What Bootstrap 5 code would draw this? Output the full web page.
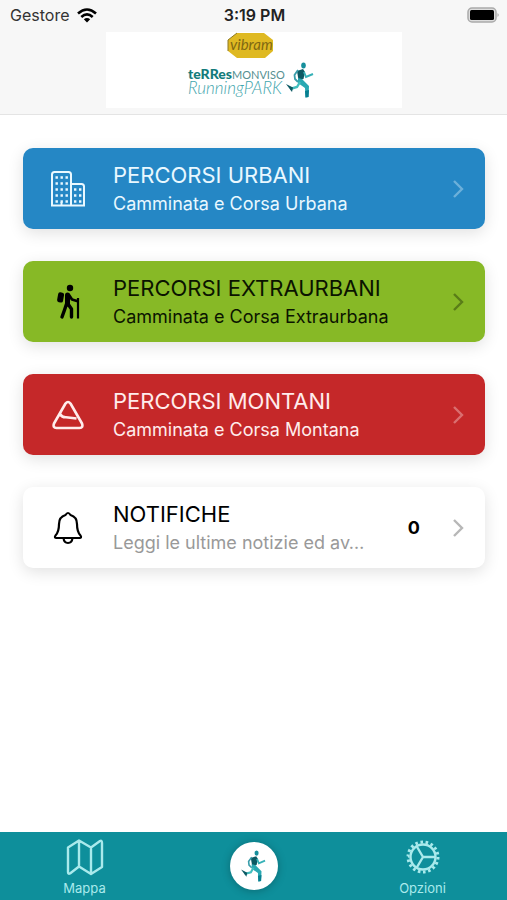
<!DOCTYPE html>
<html lang="it">
<head>
<meta charset="utf-8">
<meta name="viewport" content="width=device-width, initial-scale=1">
<title>Terres Monviso Running Park</title>
<link href="https://cdn.jsdelivr.net/npm/bootstrap@5.3.0/dist/css/bootstrap.min.css" rel="stylesheet">
<style>
body { font-family: Inter, "Liberation Sans", sans-serif; color: #000; background: #fff; }
svg { display: block; flex: none; }
.top-area { background: #f7f7f7; border-bottom: 1px solid #e4e4e4; padding-bottom: 6px; }
.status-bar { height: 32px; padding: 0 8px 2px 10px; font-size: 16px; line-height: 24px; }
.status-bar > * { flex: 1 1 0; }
.carrier { color: #333; }
.clock { font-weight: 600; color: #222; }
.brand-banner { width: 296px; height: 76px; background: #fff; }
.menu { padding: 33px 22px 24px 23px; gap: 32px; }
.tile { min-height: 81px; border-radius: 10px; padding: 10px 21px 10px 25px; box-shadow: 0 4px 16px rgba(0,0,0,.12); }
.tile-blue { background: #2587c5; color: #e9f8ff; }
.tile-green { background: #87b926; color: #0b1400; }
.tile-red { background: #c52829; color: #ffecec; }
.tile-white { background: #fff; color: #000; }
.tile-icon { width: 40px; margin-right: 25px; }
.tile-text { padding-top: 2px; }
.tile-title { font-size: 22px; line-height: 29px; }
.tile-sub { font-size: 18px; line-height: 28px; }
.tile-white .tile-sub { color: #999; }
.chev { opacity: .36; }
.tile-white .chev { opacity: .28; }
.counter { font-size: 18px; font-weight: 700; margin: 0 32px 0 36px; }
.tab-area { background: #0e8f9b; height: 68px; }
.tab-area > * { flex: 1 1 0; }
.tab-link { color: #a9eaec; font-size: 13px; line-height: 16px; padding-top: 2px; }
.tab-link:hover { color: #fff; }
.home-disc { width: 48px; height: 48px; background: #fff; box-shadow: 0 1px 8px rgba(0,0,0,.25); }
</style>
</head>
<body class="d-flex flex-column min-vh-100">
<svg width="0" height="0" class="position-absolute" aria-hidden="true">
  <symbol id="runner" viewBox="0 0 28 36">
    <ellipse cx="17.500" cy="3.500" rx="2.300" ry="3" fill="#168f9c"/>
    <path d="M11 9 L17 7 L19 10 L17.500 17 L12.500 18Z" fill="#0c5963"/>
    <path d="M12 8 L8.500 13 L9 17 L12 20" fill="none" stroke="#399daa" stroke-width="1.800"/>
    <path d="M18 10 L20 15 L27 12" fill="none" stroke="#36b1b7" stroke-width="2"/>
    <path d="M12 16 L16 17 L23 24 L22.500 35 L19.500 35.500 L19 26 L12 21Z" fill="#29a8b2"/>
    <path d="M14 20 L11 25 L4 27" fill="none" stroke="#42bdbd" stroke-width="2.400"/>
    <path d="M0 22 L7 25.500 L6 30Z" fill="#0c5963"/>
    <path d="M19 29 L23 28 L22.500 35 L19.500 35.500Z" fill="#087f90"/>
  </symbol>
  <symbol id="chevron" viewBox="0 0 12 20"><path d="M2 2 L10 10 L2 18" fill="none" stroke="currentColor" stroke-width="2.400"/></symbol>
</svg>

<header class="top-area">
  <div class="status-bar d-flex align-items-center">
    <div class="carrier d-flex align-items-center gap-2">Gestore
      <svg width="20" height="15" viewBox="0 0 20 15" fill="none" stroke="#000" stroke-width="2.600" role="img" aria-label="Wi-Fi"><path d="M1 5.500Q10-2.500 19 5.500M4.300 9Q10 3.800 15.700 9"/><path d="M6.800 11.300Q10 8.500 13.200 11.300L10 14.600Z" fill="#000" stroke="none"/></svg>
    </div>
    <div class="clock text-center text-nowrap">3:19 PM</div>
    <div class="d-flex justify-content-end">
      <svg width="32" height="17" viewBox="0 0 32 17" role="img" aria-label="Batteria"><rect x="1" y="1" width="28" height="14" rx="4" fill="#ddd" stroke="#aaa" stroke-width="1.500"/><rect x="3" y="3" width="24" height="10" rx="1.500" fill="#000"/><path d="M30.500 6Q33 8 30.500 10Z" fill="#aaa"/></svg>
    </div>
  </div>
  <div class="brand-banner mx-auto">
    <svg class="w-100 h-100" viewBox="0 0 296 76" role="img" aria-label="Vibram, Terres Monviso Running Park">
      <path d="M131 1H158L167 8V19L159 26H131L122 19V8Z" fill="#dfb922"/>
      <path d="M122 19V8L131 1" fill="none" stroke="#8d7922"/>
      <text x="124" y="18" font-size="15" font-style="italic" font-family="Lato, sans-serif" fill="#806812">vibram</text>
      <text x="82" y="47" font-size="14" font-weight="900" font-family="Lato, sans-serif" fill="#137b7b">teRRes</text>
      <text x="126" y="47" font-size="11" font-weight="400" font-family="Lato, sans-serif" fill="#568f91">MONVISO</text>
      <text x="82" y="62" font-size="17" font-weight="300" font-style="italic" font-family="Lato, sans-serif" fill="#3fa6ad">RunningPARK</text>
      <use href="#runner" x="180" y="30" width="28" height="36"/>
    </svg>
  </div>
</header>

<main class="menu d-flex flex-column flex-grow-1">
  <a href="#urbani" class="tile tile-blue d-flex align-items-center text-decoration-none">
    <span class="tile-icon d-flex justify-content-center">
      <svg width="36" height="36" viewBox="0 0 36 36" fill="none" stroke="currentColor" stroke-width="2"><path d="M2 34.500V3.500Q2 1 4.500 1H18.500Q21 1 21 3.500V34.500ZM21 13H31.500Q34 13 34 15.500V34.500H21M11.500 34V31"/><path d="M5.500 6.500H18M5.500 12.500H18M5.500 18.500H18M5.500 24.500H18M5.500 30.500H18" stroke-width="2.400" stroke-dasharray="2.400 2.600"/><path d="M24 18.500H32M24 24.500H32M24 30.500H32" stroke-width="2.400" stroke-dasharray="2.400 2.600"/></svg>
    </span>
    <span class="tile-text flex-grow-1 text-truncate"><span class="tile-title d-block text-truncate">PERCORSI URBANI</span><span class="tile-sub d-block text-truncate">Camminata e Corsa Urbana</span></span>
    <svg class="chev" width="12" height="20"><use href="#chevron"/></svg>
  </a>
  <a href="#extraurbani" class="tile tile-green d-flex align-items-center text-decoration-none">
    <span class="tile-icon d-flex justify-content-center">
      <svg width="26" height="36" viewBox="0 0 26 36" fill="none" stroke="#000"><circle cx="15" cy="4" r="3.200" fill="#000" stroke="none"/><rect x="2.500" y="8.500" width="6" height="10" rx="2" transform="rotate(10 6 14)" fill="#000" stroke="none"/><path d="M12.500 11V20" stroke-width="5" stroke-linecap="round"/><path d="M14 11L17 15.500L22 17" stroke-width="2.800" stroke-linecap="round" stroke-linejoin="round"/><path d="M11.500 20L9.500 26L7 33M13 20L16.500 25V33" stroke-width="3.400" stroke-linecap="round" stroke-linejoin="round"/><path d="M23 14V34.500" stroke-width="2.200"/></svg>
    </span>
    <span class="tile-text flex-grow-1 text-truncate"><span class="tile-title d-block text-truncate">PERCORSI EXTRAURBANI</span><span class="tile-sub d-block text-truncate">Camminata e Corsa Extraurbana</span></span>
    <svg class="chev" width="12" height="20"><use href="#chevron"/></svg>
  </a>
  <a href="#montani" class="tile tile-red d-flex align-items-center text-decoration-none">
    <span class="tile-icon d-flex justify-content-center">
      <svg width="32" height="30" viewBox="0 0 32 30" fill="none" stroke="currentColor" stroke-width="2.600" stroke-linejoin="round"><path d="M13.500 3.500Q16 0.500 18.500 3.500L30 23.500Q31.500 28 27.500 28H4.500Q0.500 28 2 23.500ZM8 14Q10 17.500 14 17.300L24.500 18.500"/></svg>
    </span>
    <span class="tile-text flex-grow-1 text-truncate"><span class="tile-title d-block text-truncate">PERCORSI MONTANI</span><span class="tile-sub d-block text-truncate">Camminata e Corsa Montana</span></span>
    <svg class="chev" width="12" height="20"><use href="#chevron"/></svg>
  </a>
  <a href="#notifiche" class="tile tile-white d-flex align-items-center text-decoration-none">
    <span class="tile-icon flex-shrink-0 d-flex justify-content-center">
      <svg width="30" height="34" viewBox="0 0 30 34" fill="none" stroke="#000" stroke-width="2.200" stroke-linejoin="round"><path d="M12.500 4Q15 0 17.500 4Q24 6 24 13Q24 21 27.500 24.500Q29 27 26.500 27H3.500Q1 27 2.500 24.500Q6 21 6 13Q6 6 12.500 4ZM10.500 27Q11 32 15 32Q19 32 19.500 27"/></svg>
    </span>
    <span class="tile-text flex-grow-1 text-truncate"><span class="tile-title d-block text-truncate">NOTIFICHE</span><span class="tile-sub d-block text-truncate">Leggi le ultime notizie ed av…</span></span>
    <span class="counter">0</span>
    <svg class="chev" width="12" height="20"><use href="#chevron"/></svg>
  </a>
</main>

<nav class="tab-area sticky-bottom d-flex align-items-center" aria-label="Principale">
  <a href="#mappa" class="tab-link d-flex flex-column align-items-center gap-1 text-decoration-none">
    <svg width="38" height="38" viewBox="0 0 38 38" fill="none" stroke="currentColor" stroke-width="2.400" stroke-linejoin="round"><path d="M2 9.500L13 2.500L25 9.500L34 3Q36 2 36 5V29L25 36L13 28.500L4 35.500Q2 36.500 2 34ZM13 2.500V28.500M25 9.500V36"/></svg>
    Mappa
  </a>
  <a href="#home" class="d-flex justify-content-center" aria-label="Home"><span class="home-disc rounded-circle d-flex align-items-center justify-content-center"><svg width="25" height="32"><use href="#runner"/></svg></span></a>
  <a href="#opzioni" class="tab-link d-flex flex-column align-items-center gap-1 text-decoration-none">
    <svg width="38" height="38" viewBox="0 0 38 38" fill="none" stroke="currentColor" stroke-width="2.400"><circle cx="19" cy="19" r="12.500"/><circle cx="19" cy="19" r="15" stroke-width="3" pathLength="36" stroke-dasharray="1 1"/><path d="M19 19H31.500M19 19L12.500 8M19 19L12.500 30"/></svg>
    Opzioni
  </a>
</nav>
<script src="https://cdn.jsdelivr.net/npm/bootstrap@5.3.0/dist/js/bootstrap.bundle.min.js"></script>
</body>
</html>
